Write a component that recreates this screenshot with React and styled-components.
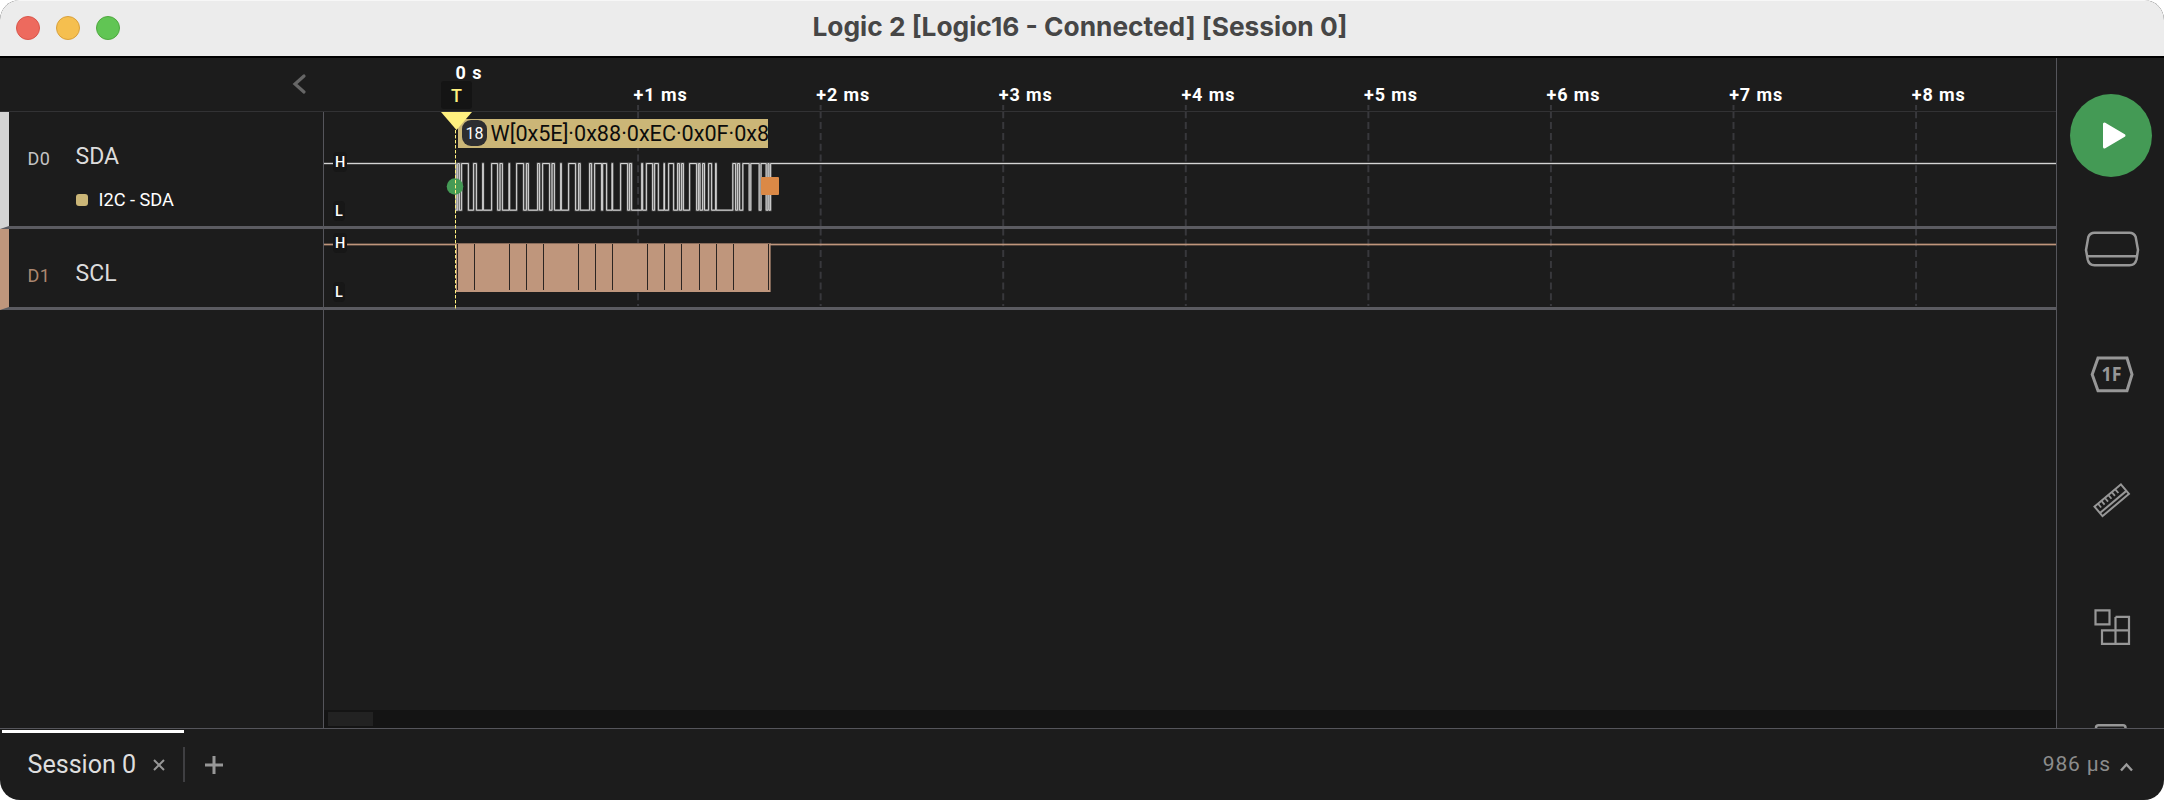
import React from "react";
import styled, { createGlobalStyle } from "styled-components";

const Global = createGlobalStyle`
  *, *::before, *::after { box-sizing: border-box; }
  body { margin: 0; background: #fff; font-family: Roboto, "Liberation Sans", sans-serif; }
`;

const color = {
  bg: "#1c1c1c",
  line: "#55555b",
  divider: "#5b5b61",
  icon: "#979797",
  white: "#d4d4d4",
  tan: "#bf967c",
  sand: "#cbb677",
  yellow: "#fff07f",
  green: "#449a55",
  orange: "#db8946",
};

const Window = styled.div`
  width: 2164px;
  height: 800px;
  display: flex;
  flex-direction: column;
  overflow: hidden;
  border-radius: 20px;
  background: ${color.bg};
`;

const TitleBar = styled.header`
  position: relative;
  flex: 0 0 58px;
  display: flex;
  justify-content: center;
  background: #ececec;
  border-top: 1px solid #f7f7f7;
  border-bottom: 2px solid #000;
`;

const Title = styled.h1`
  margin: 0;
  padding-right: 4px;
  font: 700 26.3px/52px Inter, sans-serif;
  color: #464646;
  white-space: pre;
`;

const Lights = styled.div`
  position: absolute;
  left: 16px;
  top: 15px;
  display: flex;
  gap: 16px;
`;

const Light = styled.span`
  width: 24px;
  height: 24px;
  border-radius: 50%;
  background: ${(p) => p.$fill};
  border: 1px solid ${(p) => p.$edge};
`;

const Body = styled.div`
  flex: 1;
  min-height: 0;
  display: flex;
`;

const Main = styled.main`
  position: relative;
  width: 2056px;
  display: flex;
  flex-direction: column;
`;

const Header = styled.div`
  position: relative;
  flex: 0 0 54px;
  display: flex;
  border-bottom: 1px solid #323234;
`;

const HeaderLeft = styled.div`
  width: 324px;
  display: flex;
  justify-content: flex-end;
  padding: 15px 16px 0 0;
`;

const Ruler = styled.div`
  flex: 1;
  display: flex;
  padding: 27px 0 0 127px;
  overflow: hidden;
`;

const Tick = styled.div`
  flex: 0 0 182.6px;
  margin-top: ${(p) => (p.$origin ? -22 : 0)}px;
  padding-left: ${(p) => (p.$origin ? 4.6 : 0)}px;
  font-size: 18px;
  line-height: 20px;
  font-weight: 700;
  letter-spacing: 0.9px;
  color: #fff;
  white-space: nowrap;
`;

const Row = styled.section`
  position: relative;
  display: flex;
  flex: 0 0 ${(p) => p.$height}px;
`;

const Info = styled.div`
  width: 324px;
  display: flex;
  padding: ${(p) => p.$top}px 0 0 18.5px;
  border-left: 9px solid ${(p) => p.$color};
  border-bottom: 3px solid ${color.divider};
  border-right: 1px solid ${color.line};
`;

const ChannelId = styled.div`
  width: 48px;
  padding-top: 2px;
  font-size: 18px;
  line-height: 26px;
  letter-spacing: 0.5px;
  color: ${(p) => p.$color};
`;

const ChannelName = styled.div`
  font-size: 23px;
  line-height: 26px;
  color: #dcdcdc;
`;

const Analyzer = styled.div`
  display: flex;
  align-items: center;
  gap: 11px;
  margin-top: 17px;
  font-size: 18.2px;
  line-height: 26px;
  color: #fff;
`;

const Swatch = styled.i`
  width: 12px;
  height: 12px;
  border-radius: 3px;
  background: ${color.sand};
`;

const Plot = styled.div`
  position: relative;
  flex: 1;
  overflow: hidden;
  border-bottom: 3px solid ${color.divider};
  svg { display: block; }
`;

const Levels = styled.div`
  position: absolute;
  left: 9px;
  top: ${(p) => p.$top}px;
  display: flex;
  flex-direction: column;
  align-items: flex-start;
  gap: 29px;
`;

const Level = styled.span`
  height: 20px;
  padding: 0 2px;
  border-radius: 4px;
  background: #171717;
  font-size: 14.5px;
  line-height: 22px;
  font-weight: 500;
  color: #fff;
`;

const Bubble = styled.div`
  position: absolute;
  left: 134px;
  top: 7px;
  width: 310px;
  height: 29px;
  display: flex;
  align-items: center;
  gap: 3.5px;
  padding-left: 4px;
  overflow: hidden;
  white-space: nowrap;
  background: ${color.sand};
  font-size: 21.6px;
  line-height: 31px;
  color: #0c0c0c;
`;

const Count = styled.span`
  flex: 0 0 25px;
  height: 26px;
  margin-top: -1px;
  border-radius: 9px;
  background: #2d2d30;
  font-size: 16px;
  line-height: 28px;
  text-align: center;
  color: #fff;
`;

const Overlay = styled.svg`
  position: absolute;
  left: 0;
  top: 0;
  pointer-events: none;
`;

const TriggerLabel = styled.div`
  position: absolute;
  left: 441px;
  top: 23px;
  width: 31px;
  height: 28px;
  border-radius: 3px;
  background: #141414;
  font-size: 18px;
  line-height: 29px;
  font-weight: 500;
  text-align: center;
  color: ${color.yellow};
`;

const Empty = styled.div`
  flex: 1;
  display: flex;
`;

const EmptyInfo = styled.div`
  width: 324px;
  border-right: 1px solid ${color.line};
`;

const EmptyPlot = styled.div`
  flex: 1;
  display: flex;
  flex-direction: column;
  justify-content: flex-end;
`;

const ScrollTrack = styled.div`
  height: 18px;
  padding: 2px 4px;
  background: #141414;
`;

const ScrollThumb = styled.div`
  width: 45px;
  height: 14px;
  background: #222;
`;

const Sidebar = styled.aside`
  flex: 1;
  display: flex;
  flex-direction: column;
  align-items: center;
  overflow: hidden;
  border-left: 1px solid ${color.line};
  padding-top: 36px;
`;

const PlayButton = styled.button`
  flex: 0 0 83px;
  width: 82px;
  margin-bottom: 9px;
  padding: 0;
  border: 0;
  border-radius: 50%;
  background: ${color.green};
  svg { display: block; }
`;

const Tool = styled.button`
  flex: 0 0 125.6px;
  display: flex;
  align-items: center;
  margin-right: 1px;
  padding: 0;
  border: 0;
  background: none;
`;

const Footer = styled.footer`
  flex: 0 0 72px;
  display: flex;
  border-top: 1px solid ${color.line};
`;

const Tab = styled.div`
  width: 182px;
  margin: 1px 0 0 2px;
  border-top: 3px solid #fff;
  padding: 18px 0 0 25.5px;
  display: flex;
  gap: 17px;
  font-size: 25.1px;
  line-height: 28px;
  color: #dedede;
  white-space: nowrap;
  svg { flex: none; margin-top: 8px; }
`;

const TabRule = styled.div`
  width: 2px;
  height: 35px;
  margin: 18px 0 0 -1px;
  background: #3f3f42;
`;

const AddTab = styled.button`
  height: 20px;
  margin: 26px 0 0 19px;
  padding: 0;
  border: 0;
  background: none;
`;

const Status = styled.div`
  margin-left: auto;
  padding: 21px 31px 0 0;
  display: flex;
  gap: 9px;
  font-size: 21px;
  line-height: 28px;
  letter-spacing: 0.8px;
  color: #8c8c8c;
  svg { margin-top: 12px; }
`;

const ticks = ["0 s", "+1 ms", "+2 ms", "+3 ms", "+4 ms", "+5 ms", "+6 ms", "+7 ms", "+8 ms"];

// High intervals of the data line, as [rise, fall] in window x.
const sdaPulses = [
  [457.7, 459.4], [461.6, 468.4], [473.6, 476.4], [482.7, 483.3], [491.6, 497.6],
  [500, 502.4], [509, 509.6], [516.6, 523.6], [526.4, 528.4], [537.6, 539.6],
  [542.6, 549.6], [552, 554.4], [560.7, 561.3], [568.6, 575.6], [578.6, 580.2],
  [589.6, 591.6], [594.6, 601.6], [602.6, 606.6], [612, 612.6], [620.6, 627.6],
  [629.6, 631.6], [641.7, 642.6], [646.4, 652.6], [654.6, 658.4], [664, 664.5],
  [668.6, 673.6], [677.6, 679.4], [681.6, 683.4], [689.6, 696.6], [698.6, 700],
  [702.6, 704.5], [708.6, 711.6], [715.6, 716.2], [732.8, 735.6], [737.6, 739.6],
  [742.8, 749.2], [750.8, 759.2], [761, 766.2], [768, 769],
];

const sclGaps = [457, 474, 509, 526, 543, 578, 595, 612, 647, 664, 681, 699, 716, 733, 768];

function sdaPath() {
  const x = (v) => v - 324;
  const hi = 51.5;
  const lo = 98.2;
  let d = `M0 ${hi}H${x(456)}V${lo}`;
  sdaPulses.forEach(([a, b]) => {
    d += `H${x(a)}V${hi}H${x(b)}V${lo}`;
  });
  return `${d}H${x(770.6)}V${hi}H1732`;
}

function SdaTrace() {
  const d = sdaPath();
  return (
    <svg width="1732" height="114" fill="none">
      <path d={d} stroke={color.white} strokeWidth="2" strokeOpacity="0.4" />
      <path d={d} stroke={color.white} strokeWidth="1" />
    </svg>
  );
}

function SclTrace() {
  return (
    <svg width="1732" height="78" fill="none">
      <path d="M0 15.5H132M446 15.5H1732" stroke={color.tan} strokeWidth="3" strokeOpacity="0.35" />
      <path d="M0 15.5H132M446 15.5H1732" stroke={color.tan} strokeWidth="1.2" />
      <rect x="132" y="14" width="314.6" height="49" fill={color.tan} />
      <path d="M132 14.5H446.6" stroke="#896d5c" />
      {sclGaps.map((g) => (
        <rect key={g} x={g - 324} y="15" width="1" height="46" fill="#2b2522" />
      ))}
    </svg>
  );
}

function Icon({ cx, cy, children, width = 2 }) {
  return (
    <svg width="60" height="60" viewBox={`${cx - 30} ${cy - 30} 60 60`} fill="none" stroke={color.icon} strokeWidth={width}>
      {children}
    </svg>
  );
}

const HexLabel = styled.text`
  font: 700 19px "Open Sans", sans-serif;
  fill: ${color.icon};
  stroke: none;
`;

export default function App() {
  return (
    <>
      <Global />
      <Window>
        <TitleBar>
          <Lights>
            <Light $fill="#ed6a5e" $edge="#d9564b" />
            <Light $fill="#f5bf4f" $edge="#d8a03c" />
            <Light $fill="#61c554" $edge="#4fa83f" />
          </Lights>
          <Title>Logic 2 [Logic16 - Connected] [Session 0]</Title>
        </TitleBar>
        <Body>
          <Main>
            <Overlay width="2056" height="252">
              {ticks.slice(1).map((t, i) => {
                const x = 455.5 + 182.57 * (i + 1);
                return (
                  <g key={t} stroke="#38383c" strokeWidth="2">
                    <path d={`M${x} 47V52`} />
                    <path d={`M${x} 53.300V168`} strokeDasharray="7 3.8" />
                    <path d={`M${x} 170.500V248`} strokeDasharray="7 3.8" />
                  </g>
                );
              })}
            </Overlay>
            <Header>
              <HeaderLeft>
                <svg width="16" height="22" fill="none" stroke="#666" strokeWidth="3.2">
                  <path d="M12 3L3 11L12 19" strokeLinecap="round" strokeLinejoin="miter" />
                </svg>
              </HeaderLeft>
              <Ruler>
                {ticks.map((t, i) => (
                  <Tick key={t} $origin={i === 0}>{t}</Tick>
                ))}
              </Ruler>
            </Header>
            <Row $height={117}>
              <Info $color={color.white} $top={32}>
                <ChannelId $color="#c4c4c4">D0</ChannelId>
                <div>
                  <ChannelName>SDA</ChannelName>
                  <Analyzer>
                    <Swatch />
                    I2C - SDA
                  </Analyzer>
                </div>
              </Info>
              <Plot>
                <SdaTrace />
                <Levels $top={40}>
                  <Level>H</Level>
                  <Level>L</Level>
                </Levels>
                <Bubble>
                  <Count>18</Count>
                  W[0x5E]·0x88·0xEC·0x0F·0x8
                </Bubble>
              </Plot>
            </Row>
            <Row $height={81}>
              <Info $color={color.tan} $top={32}>
                <ChannelId $color="#ab8770">D1</ChannelId>
                <ChannelName>SCL</ChannelName>
              </Info>
              <Plot>
                <SclTrace />
                <Levels $top={4}>
                  <Level>H</Level>
                  <Level>L</Level>
                </Levels>
              </Plot>
            </Row>
            <Empty>
              <EmptyInfo />
              <EmptyPlot>
                <ScrollTrack>
                  <ScrollThumb />
                </ScrollTrack>
              </EmptyPlot>
            </Empty>
            <TriggerLabel>T</TriggerLabel>
            <Overlay width="800" height="252">
              <circle cx="455" cy="128.5" r="8.3" fill={color.green} />
              <rect x="761" y="119" width="18" height="18" rx="1" fill={color.orange} />
              <path d="M455.5 72V252" stroke={color.yellow} strokeDasharray="3.4 1.6" />
              <path d="M441 54H472L456.5 72Z" fill={color.yellow} />
            </Overlay>
          </Main>
          <Sidebar>
            <PlayButton>
              <svg width="82" height="83" fill="#fff" stroke="#fff" strokeWidth="3" strokeLinejoin="round">
                <path d="M34.5 30V53L54 41.5Z" />
              </svg>
            </PlayButton>
            <Tool>
              <Icon cx={2110.5} cy={249} width={2.5}>
                <path d="M2095 232.700H2130Q2134.500 232.700 2136.200 237L2138.500 250L2137 259.500Q2135.500 265.300 2130 265.300H2095Q2089.500 265.300 2088.200 259.500L2086.500 250L2088.800 237Q2090.500 232.700 2095 232.700ZM2087.500 256.300H2138" />
              </Icon>
            </Tool>
            <Tool>
              <Icon cx={2110.5} cy={374.6} width={3}>
                <path d="M2098.500 358.700H2127.500L2132.500 375L2127.500 391.300H2098.500L2092.700 375Z" />
                <HexLabel x="2102" y="382" textLength="20" lengthAdjust="spacingAndGlyphs">1F</HexLabel>
              </Icon>
            </Tool>
            <Tool>
              <Icon cx={2110.5} cy={500.5}>
                <g transform="rotate(-40 2112.2 500.8)">
                  <rect x="2095" y="494.500" width="34.500" height="12.500" />
                  <path d="M2095 503H2129.500" />
                  <path d="M2099.500 495V499.500M2104 495V499.500M2108.500 495V499.500M2113 495V499.500M2117.500 495V499.500M2122 495V499.500" strokeWidth="1.8" />
                </g>
              </Icon>
            </Tool>
            <Tool>
              <Icon cx={2110.5} cy={625.6} width={2.2}>
                <path d="M2096 610H2110V624H2096ZM2116 616.500H2129.500V643.500H2102.500V630H2129.500M2116 616.500V643.500" />
              </Icon>
            </Tool>
            <Tool>
              <Icon cx={2110.5} cy={751.2} width={2.5}>
                <rect x="2096.500" y="725.500" width="29.500" height="50" rx="2.500" />
              </Icon>
            </Tool>
          </Sidebar>
        </Body>
        <Footer>
          <Tab>
            Session 0
            <svg width="12" height="12" fill="none" stroke="#979797" strokeWidth="2">
              <path d="M1 1L11 11M11 1L1 11" />
            </svg>
          </Tab>
          <TabRule />
          <AddTab>
            <svg width="20" height="20" fill="none" stroke="#979797" strokeWidth="3">
              <path d="M1 10H19M10 1V19" />
            </svg>
          </AddTab>
          <Status>
            986 µs
            <svg width="13" height="10" fill="none" stroke="#9c9c9c" strokeWidth="2.4">
              <path d="M1 8.500L6.500 2.500L12 8.500" />
            </svg>
          </Status>
        </Footer>
      </Window>
    </>
  );
}
